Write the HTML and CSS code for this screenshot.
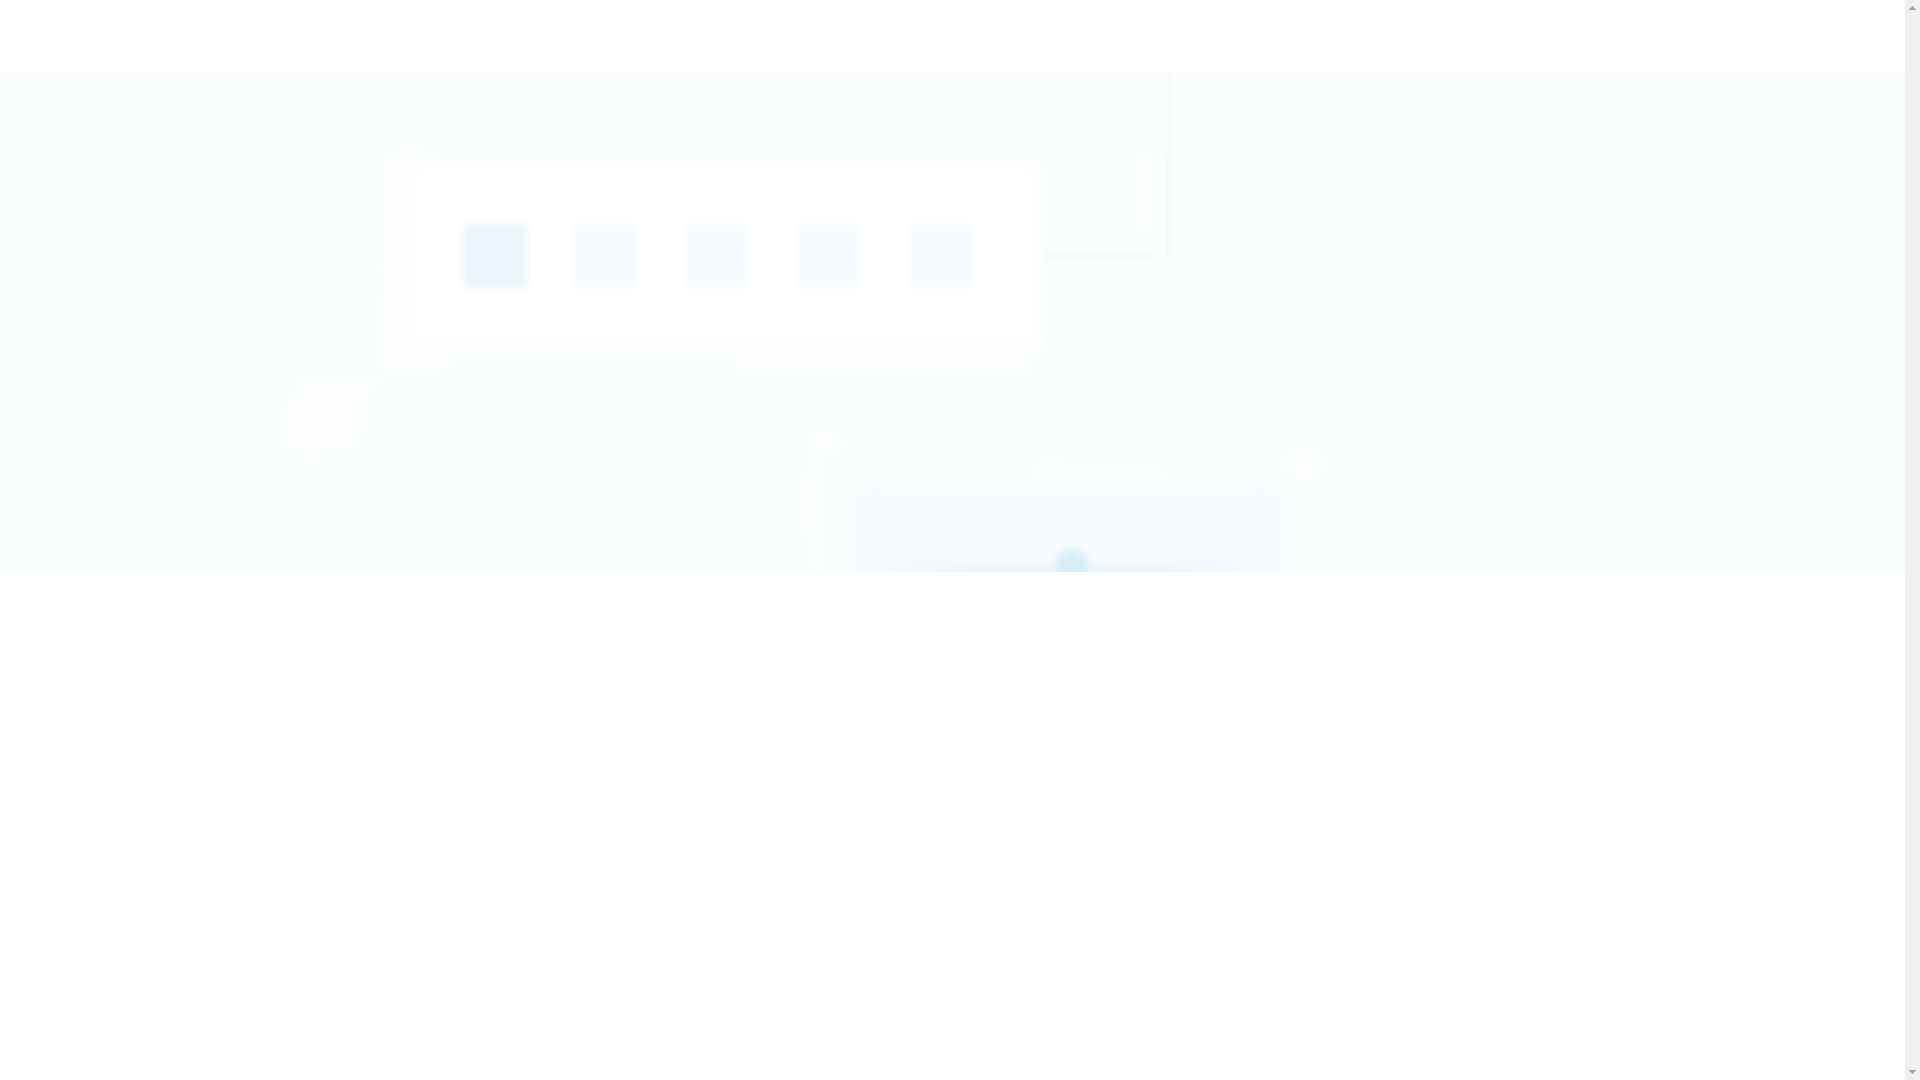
FILE: index.html
```html
<!DOCTYPE html>
<html lang="en">
<head>
<meta charset="utf-8">
<title>Home</title>
<link rel="stylesheet" href="styles.css">
</head>
<body>
<div class="page">
  <header class="header"></header>
  <main class="main">
    <section class="hero">
      <svg class="hero-art" viewBox="0 72 1905 500" preserveAspectRatio="xMidYMid slice" aria-hidden="true">
        <defs>
          <filter id="soft" x="-20%" y="-20%" width="140%" height="140%" color-interpolation-filters="sRGB"><feGaussianBlur stdDeviation="5"/></filter>
          <filter id="edge" x="-20%" y="-20%" width="140%" height="140%" color-interpolation-filters="sRGB"><feGaussianBlur stdDeviation="3"/></filter>
          <linearGradient id="line" x1="0" x2="1" y1="0" y2="0">
            <stop offset="0" stop-color="#ebf5f8" stop-opacity="0"/>
            <stop offset=".3" stop-color="#ebf5f8"/>
            <stop offset=".7" stop-color="#ebf5f8"/>
            <stop offset="1" stop-color="#ebf5f8" stop-opacity="0"/>
          </linearGradient>
          <linearGradient id="rule" x1="0" x2="1" y1="0" y2="0">
            <stop offset="0" stop-color="#f5fafa"/>
            <stop offset=".5" stop-color="#f4f9f9"/>
            <stop offset="1" stop-color="#f7fbfc"/>
          </linearGradient>
        </defs>

        <path fill="#fcfdfe" d="M386 160q6-10 30-12l30 12h584q12 0 14 16v164q0 14-16 18v18H740v-15H450l-10 12h-54l-10-16v-55l6-6z" filter="url(#edge)"/>
        <rect x="408" y="167" width="630" height="174" rx="16" fill="#fff" filter="url(#soft)"/>

        <g filter="url(#edge)">
          <rect x="463" y="224" width="64" height="64" rx="4" fill="#eaf6fb"/>
          <rect x="574" y="224" width="62" height="64" rx="5" fill="#f6fbfe"/>
          <rect x="686" y="224" width="62" height="64" rx="5" fill="#f5fbfe"/>
          <rect x="798" y="224" width="61" height="64" rx="5" fill="#f6fbfd"/>
          <rect x="910" y="224" width="62" height="64" rx="5" fill="#f6fbfd"/>
        </g>

        <rect x="1166" y="72" width="5" height="86" fill="#f7fbfc"/>
        <rect x="1166" y="156" width="5" height="100" fill="#f4f9fa"/>
        <rect x="1139" y="157" width="7" height="70" fill="#fbfdfe"/>
        <rect x="1044" y="253" width="112" height="6" fill="url(#rule)"/>

        <path fill="#fcfdfe" d="M296 378h88l-10 9-9 6v36l-8 10-10 9h-28v9h-14v-9h-19v-32l6-18 4-6z"/>
        <path fill="#fcfdfe" d="M811 433h22l10 10v6h-19v123h-14l-5-75z"/>
        <path fill="#fcfdfe" d="M1288 452h26l8 8v10l-8 8h-12l-17-12z"/>
        <path fill="#fbfeff" d="M1038 463h30v6h88l10 8v8h-132z"/>

        <rect x="853" y="489" width="434" height="120" rx="22" fill="#f5fbfe" filter="url(#soft)"/>
        <rect x="890" y="556" width="340" height="20" fill="#f2fafe" filter="url(#soft)"/>
        <rect x="890" y="565" width="350" height="14" fill="url(#line)" filter="url(#edge)"/>
        <circle cx="1072" cy="566" r="16" fill="#d6eef8" filter="url(#edge)"/>
      </svg>
    </section>
  </main>
</div>
<div class="scrollbar">
  <button class="scroll-button" type="button" aria-label="Scroll up">
    <svg class="arrow" viewBox="0 0 7 4" shape-rendering="crispEdges"><path d="M3 0h1v1h1v1h1v1h1v1H0V3h1V2h1V1h1z"/></svg>
  </button>
  <button class="scroll-button" type="button" aria-label="Scroll down">
    <svg class="arrow" viewBox="0 0 7 4" shape-rendering="crispEdges"><path d="M0 0h7v1H6v1H5v1H4v1H3V3H2V2H1V1H0z"/></svg>
  </button>
</div>
</body>
</html>
```
FILE: styles.css
```css
* {
  box-sizing: border-box;
}

body {
  margin: 0;
  min-height: 100vh;
  display: grid;
  grid-template-columns: minmax(0, 1fr) 15px;
  background: #fff;
  font-family: "Open Sans", "Liberation Sans", sans-serif;
}

.header {
  height: 72px;
  background: #fff;
}

.hero {
  height: 500px;
  background: #f9fdfe;
  overflow: hidden;
}

.hero-art {
  display: block;
  width: 100%;
  height: 100%;
}

.scrollbar {
  display: flex;
  flex-direction: column;
  justify-content: space-between;
  background: #f0f0f0;
}

.scroll-button {
  display: flex;
  align-items: center;
  justify-content: center;
  width: 100%;
  height: 16px;
  padding: 0;
  border: 0;
  background: transparent;
}

.arrow {
  width: 7px;
  height: 4px;
  fill: #a3a3a3;
}
```
